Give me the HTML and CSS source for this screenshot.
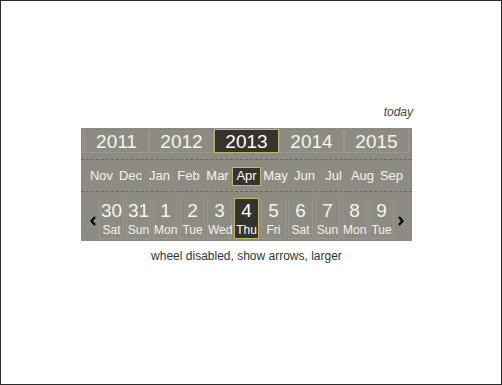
FILE: index.html
```html
<!DOCTYPE html>
<html>
<head>
<meta charset="utf-8">
<link rel="stylesheet" href="styles.css">
</head>
<body>
<div class="frame">
  <div class="wrap">
    <div class="today">today</div>
    <div class="widget">
      <div class="row years">
        <div class="cell"><span class="box">2011</span></div>
        <div class="cell"><span class="box">2012</span></div>
        <div class="cell"><span class="box sel">2013</span></div>
        <div class="cell"><span class="box">2014</span></div>
        <div class="cell"><span class="box">2015</span></div>
      </div>
      <div class="row months">
        <div class="cell"><span class="box">Nov</span></div>
        <div class="cell"><span class="box">Dec</span></div>
        <div class="cell"><span class="box">Jan</span></div>
        <div class="cell"><span class="box">Feb</span></div>
        <div class="cell"><span class="box">Mar</span></div>
        <div class="cell"><span class="box sel">Apr</span></div>
        <div class="cell"><span class="box">May</span></div>
        <div class="cell"><span class="box">Jun</span></div>
        <div class="cell"><span class="box">Jul</span></div>
        <div class="cell"><span class="box">Aug</span></div>
        <div class="cell"><span class="box">Sep</span></div>
      </div>
      <div class="row days">
        <div class="arrow left"><svg width="6" height="10" viewBox="0 0 6 10"><polyline points="5,1 1.5,5 5,9" fill="none" stroke="#000" stroke-width="2.2"/></svg></div>
        <div class="cell"><span class="box"><span class="num">30</span><span class="dn">Sat</span></span></div>
        <div class="cell"><span class="box"><span class="num">31</span><span class="dn">Sun</span></span></div>
        <div class="cell"><span class="box"><span class="num">1</span><span class="dn">Mon</span></span></div>
        <div class="cell"><span class="box"><span class="num">2</span><span class="dn">Tue</span></span></div>
        <div class="cell"><span class="box"><span class="num">3</span><span class="dn">Wed</span></span></div>
        <div class="cell"><span class="box sel"><span class="num">4</span><span class="dn">Thu</span></span></div>
        <div class="cell"><span class="box"><span class="num">5</span><span class="dn">Fri</span></span></div>
        <div class="cell"><span class="box"><span class="num">6</span><span class="dn">Sat</span></span></div>
        <div class="cell"><span class="box"><span class="num">7</span><span class="dn">Sun</span></span></div>
        <div class="cell"><span class="box"><span class="num">8</span><span class="dn">Mon</span></span></div>
        <div class="cell"><span class="box"><span class="num">9</span><span class="dn">Tue</span></span></div>
        <div class="arrow right"><svg width="6" height="10" viewBox="0 0 6 10"><polyline points="1,1 4.5,5 1,9" fill="none" stroke="#000" stroke-width="2.2"/></svg></div>
      </div>
    </div>
    <div class="caption">wheel disabled, show arrows, larger</div>
  </div>
</div>
</body>
</html>
```

FILE: styles.css
```css
html, body {
  margin: 0;
  padding: 0;
  background: #fff;
}
.frame {
  box-sizing: border-box;
  width: 502px;
  height: 385px;
  border: 1px solid #2a2a2a;
  padding-top: 104px;
  font-family: "Liberation Sans", Arial, sans-serif;
}
.wrap {
  width: 331px;
  margin-left: 80px;
}
.today {
  text-align: right;
  font-style: italic;
  font-size: 12px;
  line-height: 14px;
  color: #444;
  margin-right: -1px;
  margin-bottom: 9px;
}
.widget {
  background: #8e8c82;
  color: #f4f4ee;
}
.row {
  display: flex;
  border-bottom: 1px dashed #69675f;
}
.row.days {
  border-bottom: none;
}
.cell {
  display: flex;
  justify-content: center;
}
.box {
  box-sizing: border-box;
  display: block;
  text-align: center;
  border: 1px solid rgba(255, 255, 255, 0.09);
  border-top-color: rgba(0, 0, 0, 0.04);
}
.box.sel {
  background: #34332e;
  border: 1px solid #bdb96c;
  color: #fff;
}
.years {
  padding: 1px 3px 6px;
}
.years .cell {
  width: 65px;
}
.years .box {
  width: 65px;
  height: 24px;
  padding-top: 2px;
  font-size: 19px;
  line-height: 20px;
}
.months {
  padding: 7px 6px 5px;
}
.months .cell {
  width: 29px;
}
.months .box {
  width: 29px;
  height: 19px;
  font-size: 13px;
  line-height: 15px;
  border-color: transparent;
}
.months .box.sel {
  border-color: #bdb96c;
}
.days {
  padding: 6px 0 2px;
}
.days .cell {
  width: 27px;
}
.days .box {
  width: 25px;
  height: 41px;
  padding-top: 2px;
}
.num {
  display: block;
  font-size: 19px;
  line-height: 20px;
  margin-bottom: 2px;
}
.dn {
  display: block;
  font-size: 12px;
  line-height: 14px;
}
.arrow {
  width: 17px;
  display: flex;
  align-items: center;
  margin-top: 5px;
}
.arrow.left {
  padding-left: 9px;
  box-sizing: border-box;
}
.arrow.right {
  padding-left: 3px;
  box-sizing: border-box;
}
.arrow svg {
  display: block;
}
.caption {
  text-align: center;
  font-size: 12px;
  line-height: 14px;
  color: #333;
  margin-top: 8px;
}
```
